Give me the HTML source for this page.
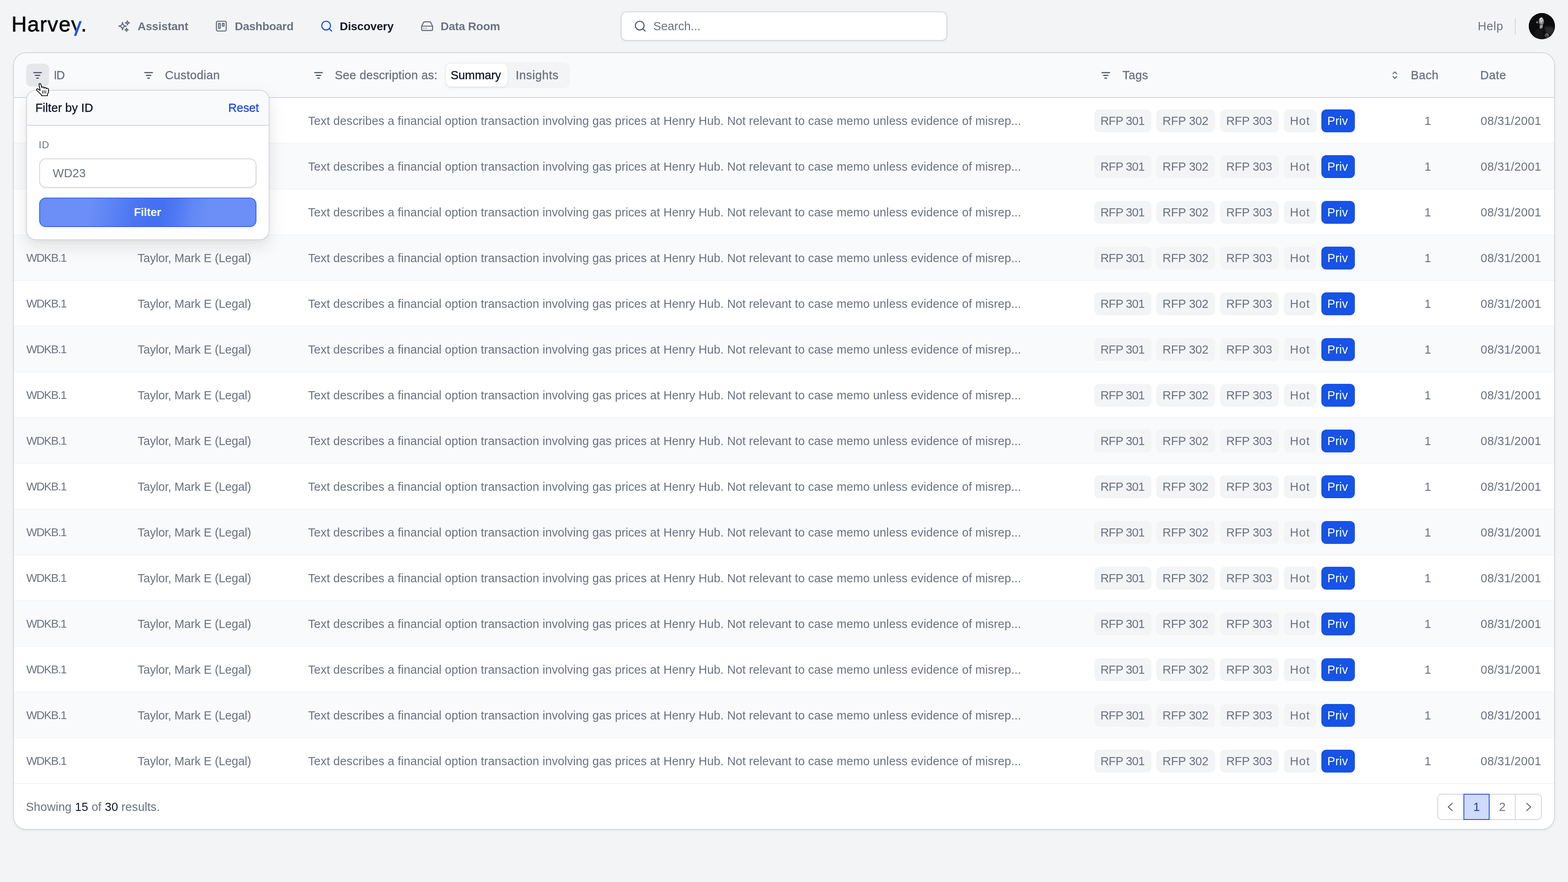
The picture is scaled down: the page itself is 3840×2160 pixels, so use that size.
<!DOCTYPE html><html lang="en"><head><meta charset="utf-8"><title>Harvey - Discovery</title><style>
*{box-sizing:border-box;margin:0;padding:0}
html,body{width:3840px;height:2160px;overflow:hidden}
body{background:#f3f4f6;font-family:"Liberation Sans",sans-serif;font-size:29px;color:#6b7280;position:relative;line-height:1}
.abs{position:absolute;white-space:nowrap}
.t{position:absolute;white-space:nowrap;line-height:40px;height:40px;margin-top:-20px}
.med{-webkit-text-stroke:0.45px currentColor}
.b{font-weight:bold}
.dark{color:#111827}
.blue{color:#1d4ed8}
body>*{will-change:transform}
svg{display:block;overflow:visible}
.ico{position:absolute;fill:none;stroke:currentColor;stroke-width:2;stroke-linecap:round;stroke-linejoin:round}
/* nav */
.logo{color:#0a0a0a;line-height:70px;height:70px;margin-top:-35px;-webkit-text-stroke:0.9px #0a0a0a}
.search{position:absolute;left:1520px;top:28px;width:800px;height:72px;background:#fff;border:2px solid #d1d5db;border-radius:14px;box-shadow:0 2px 4px rgba(0,0,0,.05)}
.avatar{position:absolute;left:3744px;top:32px;width:64px;height:64px;border-radius:50%;overflow:hidden;background:#0d0d0f}
/* card */
.card{position:absolute;left:32px;top:128px;width:3776px;height:1904px;background:#fff;border:2px solid #d3d6dc;border-radius:32px;overflow:hidden;box-shadow:0 3px 6px rgba(0,0,0,.05)}
.card .in{position:absolute;left:-34px;top:-130px;width:3840px;height:2160px}
.thead{position:absolute;left:32px;top:128px;width:3776px;height:110px;background:#f9fafb}
.hline{position:absolute;left:32px;top:238px;width:3776px;height:2px;background:#d1d5db}
.row{position:absolute;left:0;width:3840px;height:112px;border-bottom:2px solid #f3f4f6}
.row.alt{background:#f9fafb}
.fbtn{position:absolute;width:56px;height:56px;border-radius:12px;top:156px}
.fbtn.on{background:#e5e7eb}
.tag{position:absolute;top:28px;height:56px;border-radius:12px;background:#f3f4f6}
.tag.priv{background:#1653e6;color:#fff}
.seg{position:absolute;left:1088px;top:152px;width:308px;height:64px;border-radius:16px;background:#f3f4f6}
.seg .on{position:absolute;left:4px;top:4px;width:150px;height:56px;border-radius:12px;background:#fff;box-shadow:0 2px 4px rgba(0,0,0,.08)}
/* pagination */
.pg{position:absolute;left:3520px;top:1944px;width:256px;height:64px;border:2px solid #d1d5db;border-radius:10px;background:#fff}
.pg .cur{position:absolute;left:62px;top:-2px;width:64px;height:64px;background:#d0dafc;border:2px solid #1d4ed8}
.pg .div{position:absolute;left:188px;top:0;width:2px;height:60px;background:#d1d5db}
/* popover */
.pop{position:absolute;left:64px;top:220px;width:596px;height:368px;background:#fff;border:2px solid #d1d5db;border-radius:24px;overflow:hidden;box-shadow:0 16px 40px rgba(17,24,39,.10),0 4px 10px rgba(17,24,39,.04)}
.pop .in{position:absolute;left:-66px;top:-222px;width:3840px;height:2160px}
.pop .hd{position:absolute;left:64px;top:220px;width:596px;height:88px;background:#f9fafb;border-bottom:2px solid #d1d5db}
.inp{position:absolute;left:96px;top:388px;width:532px;height:72px;border:2px solid #d1d5db;border-radius:16px;background:#fff;box-shadow:0 2px 3px rgba(0,0,0,.05)}
.btn{position:absolute;left:96px;top:484px;width:532px;height:72px;border:2px solid #2f62ea;border-radius:16px;background:linear-gradient(100deg,#6b8ff6 0%,#6b8ff6 23%,#5b83f4 34%,#4b76f2 44%,#4471f1 51%,#4471f1 56%,#5179f2 63%,#6188f5 70%,#6b8ff6 78%,#6b8ff6 100%)}
</style></head><body>
<div class="t logo" style="left:28.0px;top:58.5px;font-size:52px;letter-spacing:1.525px;">Harvey.</div>
<svg class="abs" style="left:160px;top:40px" width="50" height="60" viewBox="160 40 50 60"><rect x="164" y="77.6" width="37.5" height="18" fill="#f3f4f6"/><polygon points="194.3,46 201.8,46 201.8,77.6 184.6,77.6" fill="#f3f4f6"/><polygon points="194.5,51.7 200.3,51.7 186.800,87.7 181,87.7" fill="#1c54ee"/></svg>
<svg class="ico" style="left:288px;top:48px;color:#6b7280" width="32" height="32" viewBox="0 0 24 24" stroke-width="1.9"><path d="M9.813 15.904 9 18.75l-.813-2.846a4.5 4.5 0 0 0-3.09-3.09L2.25 12l2.846-.813a4.5 4.5 0 0 0 3.09-3.09L9 5.25l.813 2.846a4.5 4.5 0 0 0 3.09 3.09L15.75 12l-2.846.813a4.5 4.5 0 0 0-3.09 3.09ZM18.259 8.715 18 9.75l-.259-1.035a3.375 3.375 0 0 0-2.455-2.456L14.250 6l1.036-.259a3.375 3.375 0 0 0 2.455-2.456L18 2.250l.259 1.035a3.375 3.375 0 0 0 2.456 2.456L21.750 6l-1.035.259a3.375 3.375 0 0 0-2.456 2.456ZM16.894 20.567 16.500 21.750l-.394-1.183a2.250 2.250 0 0 0-1.423-1.423L13.500 18.750l1.183-.394a2.250 2.250 0 0 0 1.423-1.423l.394-1.183.394 1.183a2.250 2.250 0 0 0 1.423 1.423l1.183.394-1.183.394a2.250 2.250 0 0 0-1.423 1.423Z"/></svg>
<div class="t b" style="left:337.0px;top:65px;font-size:28px;letter-spacing:-0.215px;">Assistant</div>
<svg class="ico" style="left:526px;top:48px;color:#6b7280" width="32" height="32" viewBox="0 0 24 24" stroke-width="2.1"><rect x="3" y="3" width="18" height="18" rx="2.4"/><rect x="7" y="7" width="3" height="9"/><rect x="14" y="7" width="3" height="5"/></svg>
<div class="t b" style="left:575.0px;top:65px;font-size:28px;letter-spacing:-0.268px;">Dashboard</div>
<svg class="ico" style="left:784px;top:48px;color:#1d4ed8" width="32" height="32" viewBox="0 0 24 24"><circle cx="11" cy="11" r="8"/><path d="m21 21-4.3-4.3"/></svg>
<div class="t b dark" style="left:832.0px;top:65px;font-size:28px;letter-spacing:-0.236px;">Discovery</div>
<svg class="ico" style="left:1030px;top:48px;color:#6b7280" width="32" height="32" viewBox="0 0 24 24"><path d="M22 12H2"/><path d="M5.45 5.11 2 12v6a2 2 0 0 0 2 2h16a2 2 0 0 0 2-2v-6l-3.45-6.89A2 2 0 0 0 16.76 4H7.24a2 2 0 0 0-1.79 1.11z"/><path d="M6 16h.01M10 16h.01"/></svg>
<div class="t b" style="left:1078.5px;top:65px;font-size:28px;letter-spacing:-0.237px;">Data Room</div>
<div class="search"><svg class="ico" style="left:30px;top:18px;color:#565f6e" width="32" height="32" viewBox="0 0 24 24"><circle cx="11" cy="11" r="8"/><path d="m21 21-4.3-4.3"/></svg><div class="t" style="left:77.7px;top:34px;">Search...</div></div>
<div class="t" style="left:3619.0px;top:64px;letter-spacing:0.762px;">Help</div>
<div class="abs" style="left:3710px;top:44px;width:2px;height:40px;background:#d1d5db"></div>
<div class="avatar"><svg width="64" height="64" viewBox="0 0 64 64"><defs><radialGradient id="fg" cx="52%" cy="35%" r="65%"><stop offset="0" stop-color="#f0f0f0"/><stop offset="0.55" stop-color="#bdbdbd"/><stop offset="1" stop-color="#4a4a4a"/></radialGradient><filter id="bl" x="-20%" y="-20%" width="140%" height="140%"><feGaussianBlur stdDeviation="0.5"/></filter><filter id="bl2" x="-20%" y="-20%" width="140%" height="140%"><feGaussianBlur stdDeviation="2.2"/></filter></defs><rect width="64" height="64" fill="#0c0c0e"/><path d="M38 34c8-2 16-1 24 3v14l-18 2z" fill="#2c2c2e" filter="url(#bl2)"/><path d="M14 44c4-5 10-7 16-7l6 2v25H12z" fill="#161618" filter="url(#bl2)"/><g filter="url(#bl)"><path d="M26.500 29.500l8-1.500-.6 7.500c-2 1.800-4.600 2.600-7 2.600z" fill="#9c9c9c"/><ellipse cx="30.200" cy="19.300" rx="6.600" ry="10.300" fill="url(#fg)" transform="rotate(-14 30.200 19.300)"/><path d="M21 14c2-6 10-8 15-4-4-.5-8 1-10 4l-2 8c-2-2-3.500-5-3-8z" fill="#151515"/><ellipse cx="20.200" cy="22.600" rx="2" ry="2.600" fill="#8f8f8f"/><path d="M31.500 22c1.600.6 3 .6 4.200 0M30 16.800c1.300-.6 2.600-.6 3.800-.2" stroke="#4a4a4a" stroke-width="1.400" fill="none"/><ellipse cx="27" cy="21" rx="2.200" ry="4" fill="#777" opacity=".55"/><path d="M24 24c1 3 2.500 5 4.500 6.500" stroke="#3a3a3a" stroke-width="1.600" fill="none"/></g><g filter="url(#bl)"><circle cx="44.200" cy="54.700" r="4" fill="none" stroke="#a8a8a8" stroke-width="1.300"/><path d="M42.500 53l1.700 3.200 1.800-3.200z" fill="#d8d8d8"/></g></svg></div>
<div class="card"><div class="in">
<div class="thead"></div>
<div class="row" style="top:240px"><div class="t" style="left:64.4px;top:56px;font-size:28px;letter-spacing:-1.600px;">WDKB.1</div><div class="t" style="left:337.0px;top:56px;letter-spacing:-0.190px;">Taylor, Mark E (Legal)</div><div class="t" style="left:754.5px;top:56px;letter-spacing:0.111px;">Text describes a financial option transaction involving gas prices at Henry Hub. Not relevant to case memo unless evidence of misrep...</div><div class="tag " style="left:2680px;width:140px"><div class="t" style="left:15.0px;top:28px;letter-spacing:-0.886px;">RFP 301</div></div><div class="tag " style="left:2832px;width:144px"><div class="t" style="left:15.0px;top:28px;letter-spacing:-0.219px;">RFP 302</div></div><div class="tag " style="left:2988px;width:144px"><div class="t" style="left:15.0px;top:28px;letter-spacing:-0.219px;">RFP 303</div></div><div class="tag " style="left:3144px;width:80px"><div class="t" style="left:15.0px;top:28px;letter-spacing:1.464px;">Hot</div></div><div class="tag priv" style="left:3236px;width:82px"><div class="t" style="left:14.5px;top:28px;letter-spacing:0.186px;">Priv</div></div><div class="t" style="left:3488.5px;top:56px;">1</div><div class="t" style="left:3626.0px;top:56px;letter-spacing:0.332px;">08/31/2001</div></div>
<div class="row alt" style="top:352px"><div class="t" style="left:64.4px;top:56px;font-size:28px;letter-spacing:-1.600px;">WDKB.1</div><div class="t" style="left:337.0px;top:56px;letter-spacing:-0.190px;">Taylor, Mark E (Legal)</div><div class="t" style="left:754.5px;top:56px;letter-spacing:0.111px;">Text describes a financial option transaction involving gas prices at Henry Hub. Not relevant to case memo unless evidence of misrep...</div><div class="tag " style="left:2680px;width:140px"><div class="t" style="left:15.0px;top:28px;letter-spacing:-0.886px;">RFP 301</div></div><div class="tag " style="left:2832px;width:144px"><div class="t" style="left:15.0px;top:28px;letter-spacing:-0.219px;">RFP 302</div></div><div class="tag " style="left:2988px;width:144px"><div class="t" style="left:15.0px;top:28px;letter-spacing:-0.219px;">RFP 303</div></div><div class="tag " style="left:3144px;width:80px"><div class="t" style="left:15.0px;top:28px;letter-spacing:1.464px;">Hot</div></div><div class="tag priv" style="left:3236px;width:82px"><div class="t" style="left:14.5px;top:28px;letter-spacing:0.186px;">Priv</div></div><div class="t" style="left:3488.5px;top:56px;">1</div><div class="t" style="left:3626.0px;top:56px;letter-spacing:0.332px;">08/31/2001</div></div>
<div class="row" style="top:464px"><div class="t" style="left:64.4px;top:56px;font-size:28px;letter-spacing:-1.600px;">WDKB.1</div><div class="t" style="left:337.0px;top:56px;letter-spacing:-0.190px;">Taylor, Mark E (Legal)</div><div class="t" style="left:754.5px;top:56px;letter-spacing:0.111px;">Text describes a financial option transaction involving gas prices at Henry Hub. Not relevant to case memo unless evidence of misrep...</div><div class="tag " style="left:2680px;width:140px"><div class="t" style="left:15.0px;top:28px;letter-spacing:-0.886px;">RFP 301</div></div><div class="tag " style="left:2832px;width:144px"><div class="t" style="left:15.0px;top:28px;letter-spacing:-0.219px;">RFP 302</div></div><div class="tag " style="left:2988px;width:144px"><div class="t" style="left:15.0px;top:28px;letter-spacing:-0.219px;">RFP 303</div></div><div class="tag " style="left:3144px;width:80px"><div class="t" style="left:15.0px;top:28px;letter-spacing:1.464px;">Hot</div></div><div class="tag priv" style="left:3236px;width:82px"><div class="t" style="left:14.5px;top:28px;letter-spacing:0.186px;">Priv</div></div><div class="t" style="left:3488.5px;top:56px;">1</div><div class="t" style="left:3626.0px;top:56px;letter-spacing:0.332px;">08/31/2001</div></div>
<div class="row alt" style="top:576px"><div class="t" style="left:64.4px;top:56px;font-size:28px;letter-spacing:-1.600px;">WDKB.1</div><div class="t" style="left:337.0px;top:56px;letter-spacing:-0.190px;">Taylor, Mark E (Legal)</div><div class="t" style="left:754.5px;top:56px;letter-spacing:0.111px;">Text describes a financial option transaction involving gas prices at Henry Hub. Not relevant to case memo unless evidence of misrep...</div><div class="tag " style="left:2680px;width:140px"><div class="t" style="left:15.0px;top:28px;letter-spacing:-0.886px;">RFP 301</div></div><div class="tag " style="left:2832px;width:144px"><div class="t" style="left:15.0px;top:28px;letter-spacing:-0.219px;">RFP 302</div></div><div class="tag " style="left:2988px;width:144px"><div class="t" style="left:15.0px;top:28px;letter-spacing:-0.219px;">RFP 303</div></div><div class="tag " style="left:3144px;width:80px"><div class="t" style="left:15.0px;top:28px;letter-spacing:1.464px;">Hot</div></div><div class="tag priv" style="left:3236px;width:82px"><div class="t" style="left:14.5px;top:28px;letter-spacing:0.186px;">Priv</div></div><div class="t" style="left:3488.5px;top:56px;">1</div><div class="t" style="left:3626.0px;top:56px;letter-spacing:0.332px;">08/31/2001</div></div>
<div class="row" style="top:688px"><div class="t" style="left:64.4px;top:56px;font-size:28px;letter-spacing:-1.600px;">WDKB.1</div><div class="t" style="left:337.0px;top:56px;letter-spacing:-0.190px;">Taylor, Mark E (Legal)</div><div class="t" style="left:754.5px;top:56px;letter-spacing:0.111px;">Text describes a financial option transaction involving gas prices at Henry Hub. Not relevant to case memo unless evidence of misrep...</div><div class="tag " style="left:2680px;width:140px"><div class="t" style="left:15.0px;top:28px;letter-spacing:-0.886px;">RFP 301</div></div><div class="tag " style="left:2832px;width:144px"><div class="t" style="left:15.0px;top:28px;letter-spacing:-0.219px;">RFP 302</div></div><div class="tag " style="left:2988px;width:144px"><div class="t" style="left:15.0px;top:28px;letter-spacing:-0.219px;">RFP 303</div></div><div class="tag " style="left:3144px;width:80px"><div class="t" style="left:15.0px;top:28px;letter-spacing:1.464px;">Hot</div></div><div class="tag priv" style="left:3236px;width:82px"><div class="t" style="left:14.5px;top:28px;letter-spacing:0.186px;">Priv</div></div><div class="t" style="left:3488.5px;top:56px;">1</div><div class="t" style="left:3626.0px;top:56px;letter-spacing:0.332px;">08/31/2001</div></div>
<div class="row alt" style="top:800px"><div class="t" style="left:64.4px;top:56px;font-size:28px;letter-spacing:-1.600px;">WDKB.1</div><div class="t" style="left:337.0px;top:56px;letter-spacing:-0.190px;">Taylor, Mark E (Legal)</div><div class="t" style="left:754.5px;top:56px;letter-spacing:0.111px;">Text describes a financial option transaction involving gas prices at Henry Hub. Not relevant to case memo unless evidence of misrep...</div><div class="tag " style="left:2680px;width:140px"><div class="t" style="left:15.0px;top:28px;letter-spacing:-0.886px;">RFP 301</div></div><div class="tag " style="left:2832px;width:144px"><div class="t" style="left:15.0px;top:28px;letter-spacing:-0.219px;">RFP 302</div></div><div class="tag " style="left:2988px;width:144px"><div class="t" style="left:15.0px;top:28px;letter-spacing:-0.219px;">RFP 303</div></div><div class="tag " style="left:3144px;width:80px"><div class="t" style="left:15.0px;top:28px;letter-spacing:1.464px;">Hot</div></div><div class="tag priv" style="left:3236px;width:82px"><div class="t" style="left:14.5px;top:28px;letter-spacing:0.186px;">Priv</div></div><div class="t" style="left:3488.5px;top:56px;">1</div><div class="t" style="left:3626.0px;top:56px;letter-spacing:0.332px;">08/31/2001</div></div>
<div class="row" style="top:912px"><div class="t" style="left:64.4px;top:56px;font-size:28px;letter-spacing:-1.600px;">WDKB.1</div><div class="t" style="left:337.0px;top:56px;letter-spacing:-0.190px;">Taylor, Mark E (Legal)</div><div class="t" style="left:754.5px;top:56px;letter-spacing:0.111px;">Text describes a financial option transaction involving gas prices at Henry Hub. Not relevant to case memo unless evidence of misrep...</div><div class="tag " style="left:2680px;width:140px"><div class="t" style="left:15.0px;top:28px;letter-spacing:-0.886px;">RFP 301</div></div><div class="tag " style="left:2832px;width:144px"><div class="t" style="left:15.0px;top:28px;letter-spacing:-0.219px;">RFP 302</div></div><div class="tag " style="left:2988px;width:144px"><div class="t" style="left:15.0px;top:28px;letter-spacing:-0.219px;">RFP 303</div></div><div class="tag " style="left:3144px;width:80px"><div class="t" style="left:15.0px;top:28px;letter-spacing:1.464px;">Hot</div></div><div class="tag priv" style="left:3236px;width:82px"><div class="t" style="left:14.5px;top:28px;letter-spacing:0.186px;">Priv</div></div><div class="t" style="left:3488.5px;top:56px;">1</div><div class="t" style="left:3626.0px;top:56px;letter-spacing:0.332px;">08/31/2001</div></div>
<div class="row alt" style="top:1024px"><div class="t" style="left:64.4px;top:56px;font-size:28px;letter-spacing:-1.600px;">WDKB.1</div><div class="t" style="left:337.0px;top:56px;letter-spacing:-0.190px;">Taylor, Mark E (Legal)</div><div class="t" style="left:754.5px;top:56px;letter-spacing:0.111px;">Text describes a financial option transaction involving gas prices at Henry Hub. Not relevant to case memo unless evidence of misrep...</div><div class="tag " style="left:2680px;width:140px"><div class="t" style="left:15.0px;top:28px;letter-spacing:-0.886px;">RFP 301</div></div><div class="tag " style="left:2832px;width:144px"><div class="t" style="left:15.0px;top:28px;letter-spacing:-0.219px;">RFP 302</div></div><div class="tag " style="left:2988px;width:144px"><div class="t" style="left:15.0px;top:28px;letter-spacing:-0.219px;">RFP 303</div></div><div class="tag " style="left:3144px;width:80px"><div class="t" style="left:15.0px;top:28px;letter-spacing:1.464px;">Hot</div></div><div class="tag priv" style="left:3236px;width:82px"><div class="t" style="left:14.5px;top:28px;letter-spacing:0.186px;">Priv</div></div><div class="t" style="left:3488.5px;top:56px;">1</div><div class="t" style="left:3626.0px;top:56px;letter-spacing:0.332px;">08/31/2001</div></div>
<div class="row" style="top:1136px"><div class="t" style="left:64.4px;top:56px;font-size:28px;letter-spacing:-1.600px;">WDKB.1</div><div class="t" style="left:337.0px;top:56px;letter-spacing:-0.190px;">Taylor, Mark E (Legal)</div><div class="t" style="left:754.5px;top:56px;letter-spacing:0.111px;">Text describes a financial option transaction involving gas prices at Henry Hub. Not relevant to case memo unless evidence of misrep...</div><div class="tag " style="left:2680px;width:140px"><div class="t" style="left:15.0px;top:28px;letter-spacing:-0.886px;">RFP 301</div></div><div class="tag " style="left:2832px;width:144px"><div class="t" style="left:15.0px;top:28px;letter-spacing:-0.219px;">RFP 302</div></div><div class="tag " style="left:2988px;width:144px"><div class="t" style="left:15.0px;top:28px;letter-spacing:-0.219px;">RFP 303</div></div><div class="tag " style="left:3144px;width:80px"><div class="t" style="left:15.0px;top:28px;letter-spacing:1.464px;">Hot</div></div><div class="tag priv" style="left:3236px;width:82px"><div class="t" style="left:14.5px;top:28px;letter-spacing:0.186px;">Priv</div></div><div class="t" style="left:3488.5px;top:56px;">1</div><div class="t" style="left:3626.0px;top:56px;letter-spacing:0.332px;">08/31/2001</div></div>
<div class="row alt" style="top:1248px"><div class="t" style="left:64.4px;top:56px;font-size:28px;letter-spacing:-1.600px;">WDKB.1</div><div class="t" style="left:337.0px;top:56px;letter-spacing:-0.190px;">Taylor, Mark E (Legal)</div><div class="t" style="left:754.5px;top:56px;letter-spacing:0.111px;">Text describes a financial option transaction involving gas prices at Henry Hub. Not relevant to case memo unless evidence of misrep...</div><div class="tag " style="left:2680px;width:140px"><div class="t" style="left:15.0px;top:28px;letter-spacing:-0.886px;">RFP 301</div></div><div class="tag " style="left:2832px;width:144px"><div class="t" style="left:15.0px;top:28px;letter-spacing:-0.219px;">RFP 302</div></div><div class="tag " style="left:2988px;width:144px"><div class="t" style="left:15.0px;top:28px;letter-spacing:-0.219px;">RFP 303</div></div><div class="tag " style="left:3144px;width:80px"><div class="t" style="left:15.0px;top:28px;letter-spacing:1.464px;">Hot</div></div><div class="tag priv" style="left:3236px;width:82px"><div class="t" style="left:14.5px;top:28px;letter-spacing:0.186px;">Priv</div></div><div class="t" style="left:3488.5px;top:56px;">1</div><div class="t" style="left:3626.0px;top:56px;letter-spacing:0.332px;">08/31/2001</div></div>
<div class="row" style="top:1360px"><div class="t" style="left:64.4px;top:56px;font-size:28px;letter-spacing:-1.600px;">WDKB.1</div><div class="t" style="left:337.0px;top:56px;letter-spacing:-0.190px;">Taylor, Mark E (Legal)</div><div class="t" style="left:754.5px;top:56px;letter-spacing:0.111px;">Text describes a financial option transaction involving gas prices at Henry Hub. Not relevant to case memo unless evidence of misrep...</div><div class="tag " style="left:2680px;width:140px"><div class="t" style="left:15.0px;top:28px;letter-spacing:-0.886px;">RFP 301</div></div><div class="tag " style="left:2832px;width:144px"><div class="t" style="left:15.0px;top:28px;letter-spacing:-0.219px;">RFP 302</div></div><div class="tag " style="left:2988px;width:144px"><div class="t" style="left:15.0px;top:28px;letter-spacing:-0.219px;">RFP 303</div></div><div class="tag " style="left:3144px;width:80px"><div class="t" style="left:15.0px;top:28px;letter-spacing:1.464px;">Hot</div></div><div class="tag priv" style="left:3236px;width:82px"><div class="t" style="left:14.5px;top:28px;letter-spacing:0.186px;">Priv</div></div><div class="t" style="left:3488.5px;top:56px;">1</div><div class="t" style="left:3626.0px;top:56px;letter-spacing:0.332px;">08/31/2001</div></div>
<div class="row alt" style="top:1472px"><div class="t" style="left:64.4px;top:56px;font-size:28px;letter-spacing:-1.600px;">WDKB.1</div><div class="t" style="left:337.0px;top:56px;letter-spacing:-0.190px;">Taylor, Mark E (Legal)</div><div class="t" style="left:754.5px;top:56px;letter-spacing:0.111px;">Text describes a financial option transaction involving gas prices at Henry Hub. Not relevant to case memo unless evidence of misrep...</div><div class="tag " style="left:2680px;width:140px"><div class="t" style="left:15.0px;top:28px;letter-spacing:-0.886px;">RFP 301</div></div><div class="tag " style="left:2832px;width:144px"><div class="t" style="left:15.0px;top:28px;letter-spacing:-0.219px;">RFP 302</div></div><div class="tag " style="left:2988px;width:144px"><div class="t" style="left:15.0px;top:28px;letter-spacing:-0.219px;">RFP 303</div></div><div class="tag " style="left:3144px;width:80px"><div class="t" style="left:15.0px;top:28px;letter-spacing:1.464px;">Hot</div></div><div class="tag priv" style="left:3236px;width:82px"><div class="t" style="left:14.5px;top:28px;letter-spacing:0.186px;">Priv</div></div><div class="t" style="left:3488.5px;top:56px;">1</div><div class="t" style="left:3626.0px;top:56px;letter-spacing:0.332px;">08/31/2001</div></div>
<div class="row" style="top:1584px"><div class="t" style="left:64.4px;top:56px;font-size:28px;letter-spacing:-1.600px;">WDKB.1</div><div class="t" style="left:337.0px;top:56px;letter-spacing:-0.190px;">Taylor, Mark E (Legal)</div><div class="t" style="left:754.5px;top:56px;letter-spacing:0.111px;">Text describes a financial option transaction involving gas prices at Henry Hub. Not relevant to case memo unless evidence of misrep...</div><div class="tag " style="left:2680px;width:140px"><div class="t" style="left:15.0px;top:28px;letter-spacing:-0.886px;">RFP 301</div></div><div class="tag " style="left:2832px;width:144px"><div class="t" style="left:15.0px;top:28px;letter-spacing:-0.219px;">RFP 302</div></div><div class="tag " style="left:2988px;width:144px"><div class="t" style="left:15.0px;top:28px;letter-spacing:-0.219px;">RFP 303</div></div><div class="tag " style="left:3144px;width:80px"><div class="t" style="left:15.0px;top:28px;letter-spacing:1.464px;">Hot</div></div><div class="tag priv" style="left:3236px;width:82px"><div class="t" style="left:14.5px;top:28px;letter-spacing:0.186px;">Priv</div></div><div class="t" style="left:3488.5px;top:56px;">1</div><div class="t" style="left:3626.0px;top:56px;letter-spacing:0.332px;">08/31/2001</div></div>
<div class="row alt" style="top:1696px"><div class="t" style="left:64.4px;top:56px;font-size:28px;letter-spacing:-1.600px;">WDKB.1</div><div class="t" style="left:337.0px;top:56px;letter-spacing:-0.190px;">Taylor, Mark E (Legal)</div><div class="t" style="left:754.5px;top:56px;letter-spacing:0.111px;">Text describes a financial option transaction involving gas prices at Henry Hub. Not relevant to case memo unless evidence of misrep...</div><div class="tag " style="left:2680px;width:140px"><div class="t" style="left:15.0px;top:28px;letter-spacing:-0.886px;">RFP 301</div></div><div class="tag " style="left:2832px;width:144px"><div class="t" style="left:15.0px;top:28px;letter-spacing:-0.219px;">RFP 302</div></div><div class="tag " style="left:2988px;width:144px"><div class="t" style="left:15.0px;top:28px;letter-spacing:-0.219px;">RFP 303</div></div><div class="tag " style="left:3144px;width:80px"><div class="t" style="left:15.0px;top:28px;letter-spacing:1.464px;">Hot</div></div><div class="tag priv" style="left:3236px;width:82px"><div class="t" style="left:14.5px;top:28px;letter-spacing:0.186px;">Priv</div></div><div class="t" style="left:3488.5px;top:56px;">1</div><div class="t" style="left:3626.0px;top:56px;letter-spacing:0.332px;">08/31/2001</div></div>
<div class="row" style="top:1808px"><div class="t" style="left:64.4px;top:56px;font-size:28px;letter-spacing:-1.600px;">WDKB.1</div><div class="t" style="left:337.0px;top:56px;letter-spacing:-0.190px;">Taylor, Mark E (Legal)</div><div class="t" style="left:754.5px;top:56px;letter-spacing:0.111px;">Text describes a financial option transaction involving gas prices at Henry Hub. Not relevant to case memo unless evidence of misrep...</div><div class="tag " style="left:2680px;width:140px"><div class="t" style="left:15.0px;top:28px;letter-spacing:-0.886px;">RFP 301</div></div><div class="tag " style="left:2832px;width:144px"><div class="t" style="left:15.0px;top:28px;letter-spacing:-0.219px;">RFP 302</div></div><div class="tag " style="left:2988px;width:144px"><div class="t" style="left:15.0px;top:28px;letter-spacing:-0.219px;">RFP 303</div></div><div class="tag " style="left:3144px;width:80px"><div class="t" style="left:15.0px;top:28px;letter-spacing:1.464px;">Hot</div></div><div class="tag priv" style="left:3236px;width:82px"><div class="t" style="left:14.5px;top:28px;letter-spacing:0.186px;">Priv</div></div><div class="t" style="left:3488.5px;top:56px;">1</div><div class="t" style="left:3626.0px;top:56px;letter-spacing:0.332px;">08/31/2001</div></div>
<div class="hline"></div>
<div class="fbtn on" style="left:64px"></div><svg class="ico" style="left:80px;top:173.5px;color:#4b5563" width="24" height="20" viewBox="0 0 24 20"><path d="M2.6 3.8h18.8M6.6 10.6h10.800M9.900 17.400h4.200" stroke-width="2.7"/></svg>
<div class="t med" style="left:131.5px;top:184px;letter-spacing:-1.600px;">ID</div>
<svg class="ico" style="left:352px;top:173.5px;color:#4b5563" width="24" height="20" viewBox="0 0 24 20"><path d="M2.6 3.8h18.8M6.6 10.6h10.800M9.900 17.400h4.200" stroke-width="2.7"/></svg>
<div class="t med" style="left:404.0px;top:184px;letter-spacing:0.443px;">Custodian</div>
<svg class="ico" style="left:768px;top:173.5px;color:#4b5563" width="24" height="20" viewBox="0 0 24 20"><path d="M2.6 3.8h18.8M6.6 10.6h10.800M9.900 17.400h4.200" stroke-width="2.7"/></svg>
<div class="t med" style="left:820.0px;top:184px;letter-spacing:0.245px;">See description as:</div>
<div class="seg"><div class="on"></div></div>
<div class="t med dark" style="left:1103.6px;top:184px;letter-spacing:-0.095px;">Summary</div>
<div class="t med" style="left:1263.0px;top:184px;letter-spacing:0.651px;">Insights</div>
<svg class="ico" style="left:2696px;top:173.5px;color:#4b5563" width="24" height="20" viewBox="0 0 24 20"><path d="M2.6 3.8h18.8M6.6 10.6h10.800M9.900 17.400h4.200" stroke-width="2.7"/></svg>
<div class="t med" style="left:2749.0px;top:184px;letter-spacing:0.414px;">Tags</div>
<svg class="ico" style="left:3404px;top:172px;color:#4b5563" width="24" height="24" viewBox="0 0 24 24" stroke-width="3"><path d="m7.200 15.200 4.800 4.800 4.800-4.800M7.200 8.800 12 4 16.800 8.800"/></svg>
<div class="t med" style="left:3455.0px;top:184px;letter-spacing:0.510px;">Bach</div>
<div class="t med" style="left:3625.0px;top:184px;letter-spacing:0.624px;">Date</div>
<div class="t" style="left:63.4px;top:1976px;letter-spacing:0.101px;">Showing <span class="dark">15</span> of <span class="dark">30</span> results.</div>
<div class="pg"><div class="cur"></div><div class="div"></div><svg class="ico" style="left:0;top:0;color:#4b5563" width="252" height="60" viewBox="3522 1946 252 60" stroke-width="3.1"><path d="M3556.700 1967.200l-10 9 10 9M3738.800 1967.200l10 9-10 9"/></svg><div class="t" style="left:86.0px;top:30px;color:#1e40af;">1</div><div class="t" style="left:149.0px;top:30px;">2</div></div>
</div></div>
<div class="pop"><div class="in"><div class="hd"></div><div class="t med dark" style="left:86.7px;top:264px;letter-spacing:0.096px;">Filter by ID</div><div class="t med blue" style="left:559.0px;top:264px;letter-spacing:-0.175px;">Reset</div><div class="t" style="left:94.8px;top:355px;font-size:24px;letter-spacing:1.232px;">ID</div><div class="inp"><div class="t" style="left:31.0px;top:34px;letter-spacing:0.086px;">WD23</div></div><div class="btn"><div class="t b" style="left:230.0px;top:34px;font-size:28px;letter-spacing:-0.312px;color:#fff;">Filter</div></div></div></div>
<svg class="abs" style="left:80px;top:196px" width="48" height="48" viewBox="80 196 48 48"><path d="M98.300 221.500L95.600 207C95.200 204.600 98.800 203.600 99.800 206L102.600 214.600C103.200 212.600 106.600 212.200 107.400 214.400L107.900 216.200C108.600 213.800 112.200 213.600 112.900 215.800L113.300 217.600C114.200 215.400 118 215.600 118.500 218.200C119.600 222.500 119.200 226.500 116.200 230.800L116 234.400L101.600 234.400L101.400 232C98.500 229.500 94.500 225.500 90.300 221.600C88.200 219.400 90.200 216.600 92.800 217.800Z" fill="#fff" stroke="#000" stroke-width="1.900" stroke-linejoin="round"/><path d="M104.300 222v6.500M108.200 222v6.500M112.100 222v6.500" stroke="#000" stroke-width="1.500" stroke-linecap="round" fill="none"/></svg>
</body></html>
